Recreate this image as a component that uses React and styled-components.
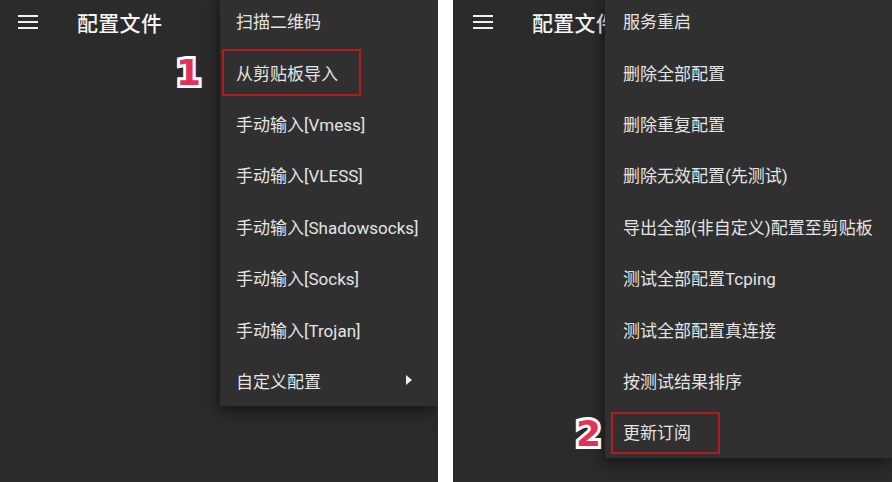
import React from 'react';
import styled, { createGlobalStyle } from 'styled-components';

const GlobalStyle = createGlobalStyle`
  html, body {
    margin: 0;
    padding: 0;
    background: #ffffff;
  }
  body {
    font-family: Roboto, "Noto Sans CJK SC", sans-serif;
  }
`;

const Page = styled.div`
  display: flex;
  gap: 15px;
  width: 892px;
  height: 482px;
  background: #ffffff;
  overflow: hidden;
`;

const Phone = styled.div`
  position: relative;
  width: ${(p) => p.$width}px;
  height: 482px;
  background: #2b2b2b;
  overflow: hidden;
`;

const AppBar = styled.div`
  display: flex;
  align-items: center;
  height: 44px;
  padding-left: ${(p) => p.$pad}px;
  gap: ${(p) => p.$gap}px;
  color: #f2f2f2;
`;

const Burger = styled.div`
  display: flex;
  flex-direction: column;
  gap: 4px;
  width: 20px;

  span {
    display: block;
    height: 2px;
    background: #f0f0f0;
  }
`;

const Title = styled.div`
  font-size: 21px;
  font-weight: 500;
  letter-spacing: 0.3px;
  color: #f4f4f4;
  padding-bottom: 1px;
`;

const Menu = styled.div`
  position: absolute;
  top: -5px;
  left: ${(p) => p.$left}px;
  right: 0;
  display: flex;
  flex-direction: column;
  background: #303030;
  box-shadow: -2px 5px 14px rgba(0, 0, 0, 0.5);
`;

const Item = styled.div`
  position: relative;
  display: flex;
  align-items: center;
  justify-content: space-between;
  height: 51.4px;
  padding-left: ${(p) => p.$pad}px;
  padding-right: 26px;
  font-size: 17px;
  color: #e4e4e4;
  white-space: nowrap;
`;

const Mark = styled.div`
  position: absolute;
  left: ${(p) => p.$left}px;
  top: ${(p) => p.$top}px;
  width: ${(p) => p.$w}px;
  height: ${(p) => p.$h}px;
  border: 2.5px solid #b41c1c;
  box-sizing: border-box;
`;

const Badge = styled.div`
  position: absolute;
  left: ${(p) => p.$left}px;
  top: ${(p) => p.$top}px;
  font-family: "DejaVu Sans", sans-serif;
  font-weight: 700;
  font-size: 36px;
  line-height: 1;
  color: #e3325a;
  -webkit-text-stroke: 6px #ffffff;
  paint-order: stroke fill;
`;

const Arrow = styled.span`
  width: 0;
  height: 0;
  border-top: 5px solid transparent;
  border-bottom: 5px solid transparent;
  border-left: 6px solid #eeeeee;
`;

const leftItems = [
  '扫描二维码',
  '从剪贴板导入',
  '手动输入[Vmess]',
  '手动输入[VLESS]',
  '手动输入[Shadowsocks]',
  '手动输入[Socks]',
  '手动输入[Trojan]',
  '自定义配置',
];

const rightItems = [
  '服务重启',
  '删除全部配置',
  '删除重复配置',
  '删除无效配置(先测试)',
  '导出全部(非自定义)配置至剪贴板',
  '测试全部配置Tcping',
  '测试全部配置真连接',
  '按测试结果排序',
  '更新订阅',
];

const Bar = () => (
  <Burger>
    <span />
    <span />
    <span />
  </Burger>
);

const App = () => (
  <>
    <GlobalStyle />
    <Page>
      <Phone $width={438}>
        <AppBar $pad={18} $gap={39}>
          <Bar />
          <Title>配置文件</Title>
        </AppBar>
        <Menu $left={220}>
          {leftItems.map((t, i) => (
            <Item key={t} $pad={16}>
              {t}
              {i === 7 && <Arrow />}
              {i === 1 && <Mark $left={2} $top={3} $w={139} $h={47} />}
            </Item>
          ))}
        </Menu>
        <Badge $left={176} $top={55}>1</Badge>
      </Phone>
      <Phone $width={439}>
        <AppBar $pad={20} $gap={39}>
          <Bar />
          <Title>配置文件</Title>
        </AppBar>
        <Menu $left={152}>
          {rightItems.map((t, i) => (
            <Item key={t} $pad={18}>
              {t}
              {i === 8 && <Mark $left={6} $top={6} $w={109} $h={42} />}
            </Item>
          ))}
        </Menu>
        <Badge $left={123} $top={416}>2</Badge>
      </Phone>
    </Page>
  </>
);

export default App;
